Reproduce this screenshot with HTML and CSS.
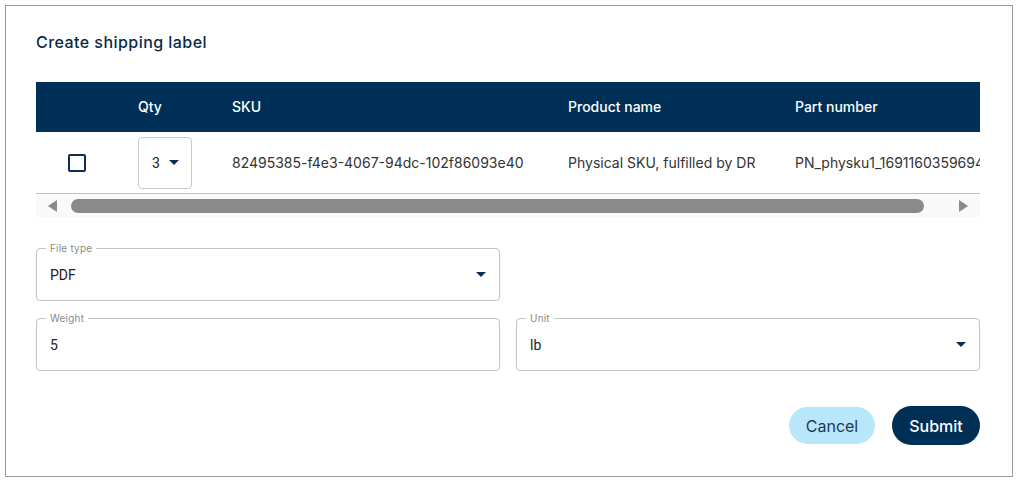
FILE: index.html
```html
<!DOCTYPE html>
<html lang="en">
<head>
<meta charset="utf-8">
<title>Create shipping label</title>
<link rel="stylesheet" href="styles.css">
</head>
<body>
<div class="frame">
  <h1 class="title">Create shipping label</h1>

  <div class="table">
    <div class="thead">
      <div class="cell"></div>
      <div class="cell">Qty</div>
      <div class="cell">SKU</div>
      <div class="cell">Product name</div>
      <div class="cell">Part number</div>
    </div>
    <div class="trow">
      <div class="cell"><span class="checkbox"></span></div>
      <div class="cell"><div class="qty"><span class="qty-val">3</span><span class="caret"></span></div></div>
      <div class="cell">82495385-f4e3-4067-94dc-102f86093e40</div>
      <div class="cell">Physical SKU, fulfilled by DR</div>
      <div class="cell">PN_physku1_1691160359694</div>
    </div>
    <div class="scrollbar">
      <span class="arrow-left"></span>
      <span class="thumb"></span>
      <span class="arrow-right"></span>
    </div>
  </div>

  <div class="fields">
    <div class="row">
      <div class="field">
        <span class="label">File type</span>
        <span class="value">PDF</span>
        <span class="caret"></span>
      </div>
    </div>
    <div class="row">
      <div class="field">
        <span class="label">Weight</span>
        <span class="value">5</span>
      </div>
      <div class="field">
        <span class="label">Unit</span>
        <span class="value">lb</span>
        <span class="caret"></span>
      </div>
    </div>
  </div>

  <div class="actions">
    <button class="btn btn-cancel">Cancel</button>
    <button class="btn btn-submit">Submit</button>
  </div>
</div>
</body>
</html>
```

FILE: styles.css
```css
* { box-sizing: border-box; }
html, body { margin: 0; padding: 0; background: #fff; }
body { font-family: Inter, "Open Sans", sans-serif; color: #2b2b2b; }

.frame {
  margin: 5px 0 0 5px;
  width: 1008px;
  height: 472px;
  border: 1px solid #9a9a9a;
  padding: 0 32px 0 30px;
  display: flex;
  flex-direction: column;
}

.title {
  margin: 0;
  padding-top: 25px;
  height: 76px;
  font-size: 16px;
  font-weight: 500;
  color: #0b2a47;
  line-height: 22px;
  letter-spacing: 0.45px;
}

.table { display: flex; flex-direction: column; }

.thead, .trow {
  display: grid;
  grid-template-columns: 102px 94px 336px 227px 185px;
  align-items: center;
  overflow: hidden;
  white-space: nowrap;
}
.thead {
  background: #003057;
  color: #fff;
  height: 50px;
  font-size: 14px;
  font-weight: 500;
  padding-bottom: 2px;
}
.trow {
  height: 62px;
  border-bottom: 1px solid #b4c4d2;
  font-size: 14px;
  color: #333;
}
.cell { overflow: hidden; }

.checkbox {
  display: block;
  margin-left: 32px;
  width: 18px;
  height: 18px;
  border: 2px solid #0b2f52;
  border-radius: 2px;
}

.qty {
  width: 54px;
  height: 52px;
  border: 1px solid #c9c9c9;
  border-radius: 4px;
  display: flex;
  align-items: center;
  padding-left: 13px;
  gap: 9px;
  font-family: Roboto, "Liberation Sans", sans-serif;
  font-size: 14px;
  color: #222;
}

.caret {
  width: 0;
  height: 0;
  border-left: 5px solid transparent;
  border-right: 5px solid transparent;
  border-top: 5px solid #0b2f52;
}

.scrollbar {
  height: 23px;
  background: #f9f9f9;
  display: flex;
  align-items: center;
  padding: 0 12px 0 12px;
}
.arrow-left {
  width: 0; height: 0;
  border-top: 6px solid transparent;
  border-bottom: 6px solid transparent;
  border-right: 9px solid #8a8a8a;
}
.arrow-right {
  width: 0; height: 0;
  border-top: 6px solid transparent;
  border-bottom: 6px solid transparent;
  border-left: 9px solid #8a8a8a;
  margin-left: 35px;
}
.thumb {
  margin-left: 14px;
  width: 853px;
  height: 14px;
  border-radius: 7px;
  background: #8a8a8a;
}

.fields {
  margin-top: 31px;
  display: flex;
  flex-direction: column;
  gap: 17px;
}
.row { display: flex; gap: 16px; }
.field {
  position: relative;
  width: 464px;
  height: 53px;
  border: 1px solid #c4c4c4;
  border-radius: 4px;
  display: flex;
  align-items: center;
  justify-content: space-between;
  padding: 0 13px 0 13px;
}
.label {
  position: absolute;
  left: 9px;
  top: -8px;
  padding: 0 4px;
  background: #fff;
  font-size: 10px;
  line-height: 14px;
  color: #8a8a8a;
  letter-spacing: 0.2px;
}
.value {
  font-family: Roboto, "Liberation Sans", sans-serif;
  font-size: 14px;
  color: #222;
}

.actions {
  margin-top: 35px;
  display: flex;
  justify-content: flex-end;
  align-items: center;
  gap: 17px;
}
.btn {
  border: none;
  border-radius: 20px;
  font-family: Inter, "Open Sans", sans-serif;
  font-size: 16px;
  cursor: pointer;
}
.btn-cancel {
  width: 86px;
  height: 37px;
  background: #b8e6fb;
  color: #1d3a55;
}
.btn-submit {
  width: 88px;
  height: 39px;
  background: #002f56;
  color: #fff;
  font-weight: 500;
}
```
